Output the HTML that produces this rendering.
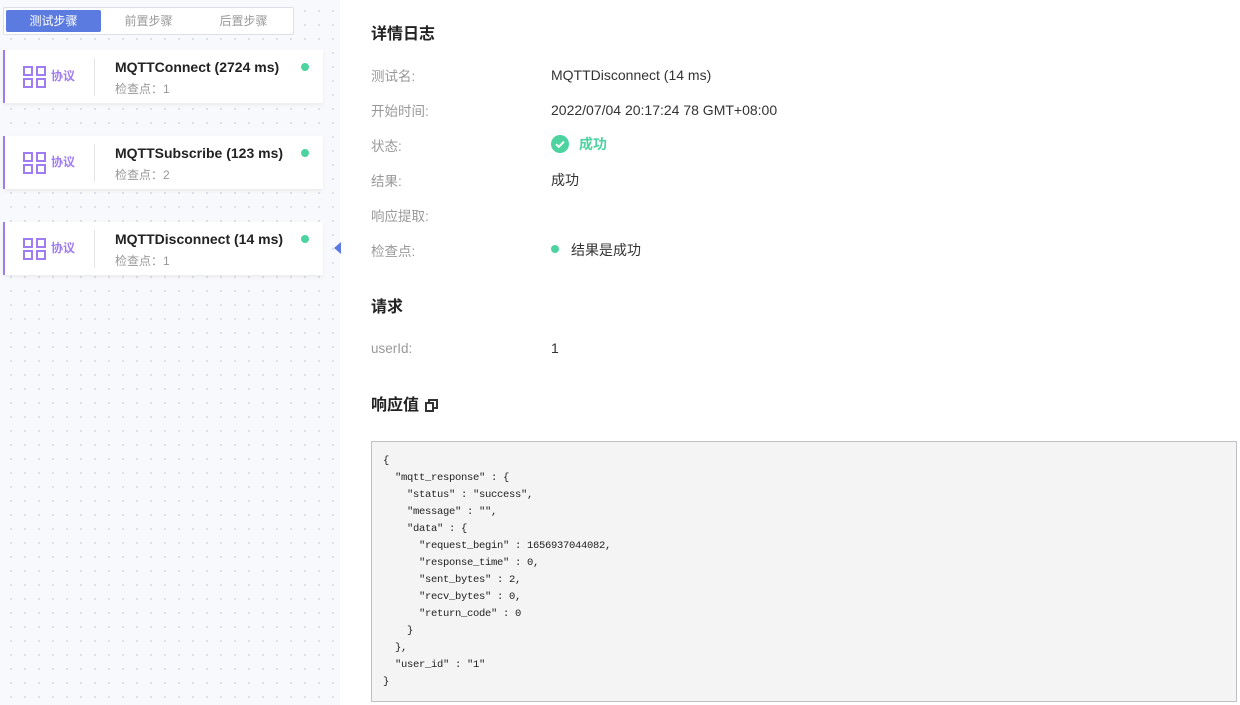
<!DOCTYPE html>
<html><head><meta charset="utf-8"><style>
*{margin:0;padding:0;box-sizing:border-box}
body{width:1240px;height:705px;position:relative;overflow:hidden;background:#fff;font-family:"Liberation Sans","Noto Sans CJK SC",sans-serif;color:#222}
.left{position:absolute;left:0;top:0;width:340px;height:705px;background-color:#f8f9fc;background-image:radial-gradient(#d8dbe3 0.8px,transparent 1.2px);background-size:14px 14px;background-position:4px 4px}
.tabs{position:absolute;left:3px;top:7px;width:291px;height:28px;border:1px solid #dcdfe6;background:#fff;border-radius:2px}
.tab{position:absolute;top:2px;height:22px;width:95px;text-align:center;line-height:22px;font-size:12px;color:#999}
.tab.on{background:#5b7be0;color:#fff;border-radius:2px}
.card{position:absolute;left:3px;width:320px;height:53px;background:#fff;border-left:2px solid #9d7cf0;box-shadow:0 2px 4px rgba(0,0,0,0.06)}
.ic{position:absolute;left:18px;top:16px;width:23px;height:22px}
.ic i{position:absolute;width:10px;height:10px;border:2px solid #a07cf3}
.proto{position:absolute;left:46px;top:17px;font-size:12px;color:#a07cf3;font-weight:bold;line-height:18px}
.div{position:absolute;left:89px;top:8px;width:1px;height:38px;background:#e4e4e4}
.tt{position:absolute;left:110px;top:8px;font-size:14px;font-weight:bold;color:#222;line-height:18px}
.cp{position:absolute;left:110px;top:31px;font-size:12px;color:#999;line-height:16px}
.dot{position:absolute;left:296px;top:13px;width:8px;height:8px;border-radius:50%;background:#4cd3a0}
.h{position:absolute;left:371px;font-size:16px;font-weight:bold;color:#222;line-height:20px}
.lb{position:absolute;left:371px;font-size:13.5px;color:#999;line-height:18px}
.v{position:absolute;left:551px;font-size:14px;color:#333;line-height:18px}
pre{position:absolute;left:371px;top:441px;width:866px;height:261px;background:#f4f4f4;border:1px solid #bfc0c6;padding:11px 11px;font-family:"Liberation Mono","Noto Sans CJK SC",monospace;font-size:10.5px;line-height:17px;color:#222;letter-spacing:-0.3px}
</style></head><body>
<div class="left">
<div class="tabs"><div class="tab on" style="left:2px">测试步骤</div><div class="tab" style="left:97px">前置步骤</div><div class="tab" style="left:192px">后置步骤</div></div>

<div class="card" style="top:50px"><div class="ic"><i style="left:0;top:0"></i><i style="left:13px;top:0"></i><i style="left:0;top:12px"></i><i style="left:13px;top:12px"></i></div><div class="proto">协议</div><div class="div"></div><div class="tt">MQTTConnect (2724 ms)</div><div class="cp">检查点：1</div><div class="dot"></div></div>
<div class="card" style="top:136px"><div class="ic"><i style="left:0;top:0"></i><i style="left:13px;top:0"></i><i style="left:0;top:12px"></i><i style="left:13px;top:12px"></i></div><div class="proto">协议</div><div class="div"></div><div class="tt">MQTTSubscribe (123 ms)</div><div class="cp">检查点：2</div><div class="dot"></div></div>
<div class="card" style="top:222px"><div class="ic"><i style="left:0;top:0"></i><i style="left:13px;top:0"></i><i style="left:0;top:12px"></i><i style="left:13px;top:12px"></i></div><div class="proto">协议</div><div class="div"></div><div class="tt">MQTTDisconnect (14 ms)</div><div class="cp">检查点：1</div><div class="dot"></div></div>
<div style="position:absolute;left:334px;top:242px;width:0;height:0;border-top:6px solid transparent;border-bottom:6px solid transparent;border-right:7px solid #5b7be0"></div>
</div>

<div class="h" style="top:25px">详情日志</div>
<div class="lb" style="top:68px">测试名:</div><div class="v" style="top:66px">MQTTDisconnect (14 ms)</div>
<div class="lb" style="top:103px">开始时间:</div><div class="v" style="top:101px">2022/07/04 20:17:24 78 GMT+08:00</div>
<div class="lb" style="top:138px">状态:</div>
<div style="position:absolute;left:551px;top:135px;width:18px;height:18px;border-radius:50%;background:#4cd3a0"><svg width="18" height="18" viewBox="0 0 18 18"><path d="M5 9.2l2.8 2.6L13 6.6" stroke="#fff" stroke-width="2" fill="none"/></svg></div>
<div class="v" style="top:135px;left:579px;color:#4cd3a0;font-weight:bold">成功</div>
<div class="lb" style="top:173px">结果:</div><div class="v" style="top:171px">成功</div>
<div class="lb" style="top:208px">响应提取:</div>
<div class="lb" style="top:243px">检查点:</div>
<div style="position:absolute;left:551px;top:245px;width:8px;height:8px;border-radius:50%;background:#4cd3a0"></div>
<div class="v" style="top:241px;left:571px">结果是成功</div>
<div class="h" style="top:298px">请求</div>
<div class="lb" style="top:340px">userId:</div><div class="v" style="top:339px">1</div>
<div class="h" style="top:396px">响应值</div>
<div style="position:absolute;left:428px;top:399px;width:10px;height:10px;border:2px solid #333"></div>
<div style="position:absolute;left:425px;top:402px;width:9px;height:10px;border:2px solid #333;background:#fff"></div>
<pre>{
  "mqtt_response" : {
    "status" : "success",
    "message" : "",
    "data" : {
      "request_begin" : 1656937044082,
      "response_time" : 0,
      "sent_bytes" : 2,
      "recv_bytes" : 0,
      "return_code" : 0
    }
  },
  "user_id" : "1"
}</pre>
</body></html>
